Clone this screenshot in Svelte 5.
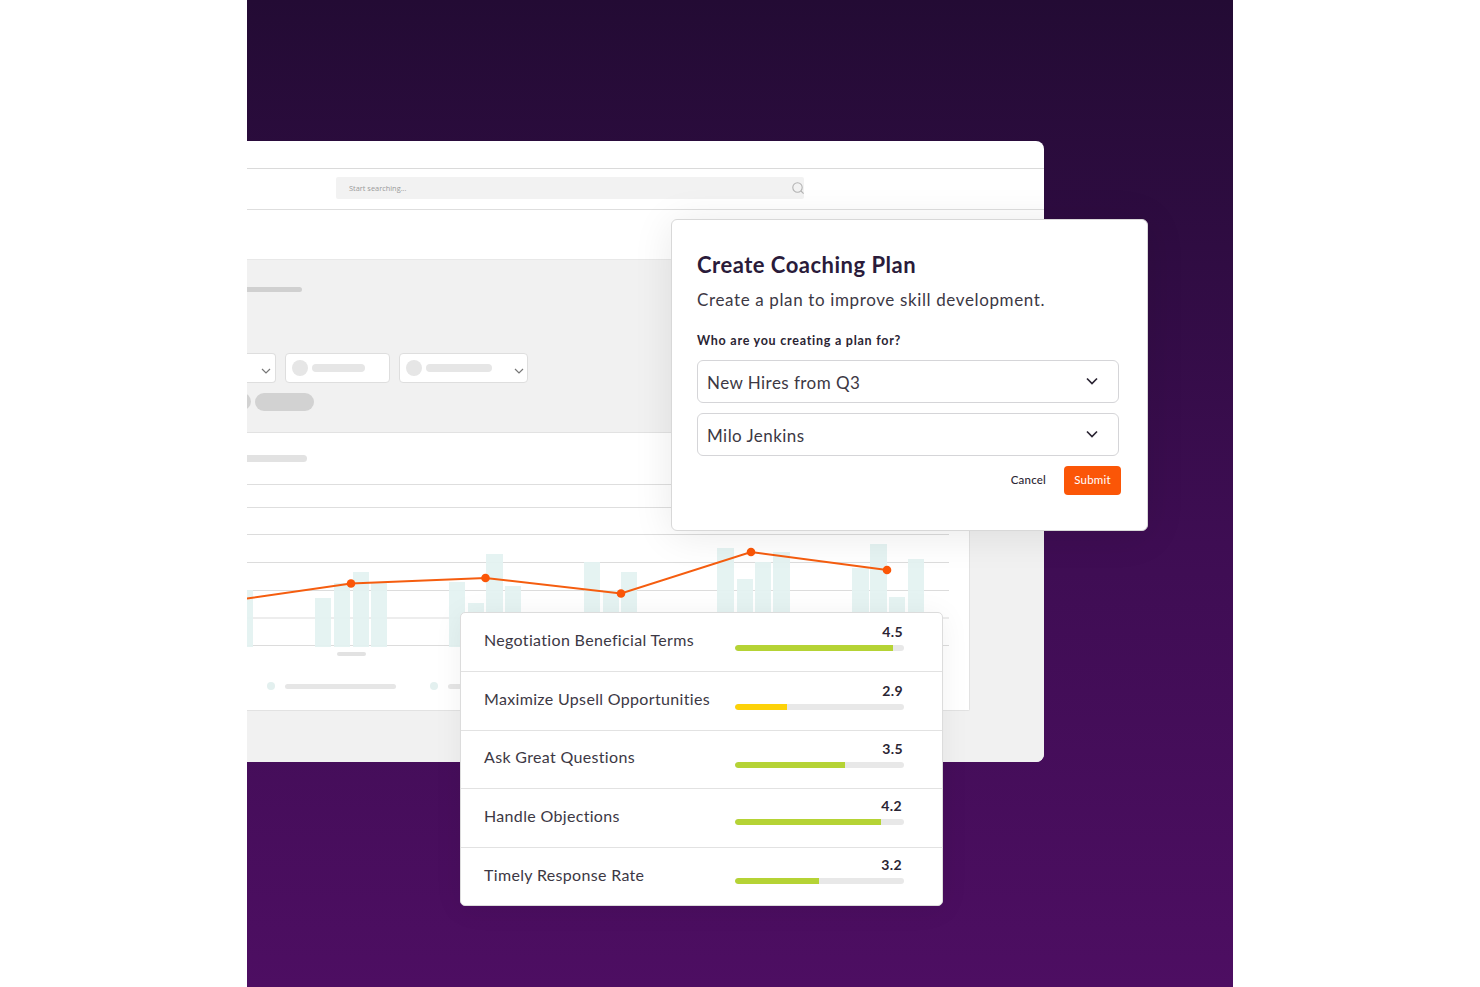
<script>
  const bars = [
    [247,590,6],[315,598,16],[334,583,16],[353,572,16],[371,583,16],
    [449,582,16],[468,603,16],[486,554,17],[505,586,16],
    [584,562,16],[603,590,16],[621,572,16],
    [717,548,17],[737,579,16],[755,562,16],[773,552,17],
    [852,568,17],[870,544,17],[889,597,16],[908,559,16]
  ];
  const pts = [[247,598.5],[351,583.5],[485.5,578],[621,593.5],[751,552],[887,570]];
  const scores = [
    { name: 'Negotiation Beneficial Terms', v: '4.5', w: 158, c: '#b5d335' },
    { name: 'Maximize Upsell Opportunities', v: '2.9', w: 52, c: '#fdd208' },
    { name: 'Ask Great Questions', v: '3.5', w: 110, c: '#b5d335' },
    { name: 'Handle Objections', v: '4.2', w: 146, c: '#b5d335', low: true },
    { name: 'Timely Response Rate', v: '3.2', w: 84, c: '#b5d335', low: true }
  ];
</script>

<main class="page">
  <section class="stage">
    <div class="window">
      <div class="topbar"></div>
      <div class="searchrow">
        <div class="search">
          <span>Start searching...</span>
          <svg width="14" height="14" viewBox="0 0 14 14" fill="none" stroke="#b4b4b4" stroke-width="1.1"><circle cx="6.5" cy="6.5" r="4.7"/><path d="M10 10l2.6 2.6"/></svg>
        </div>
      </div>
      <div class="subbar"></div>
      <div class="workspace">
        <div class="headbar"></div>
        <div class="filters">
          <div class="filter f1"><svg class="chev" width="10" height="6" viewBox="0 0 10 6" fill="none" stroke="#777" stroke-width="1.2"><path d="M1 1l4 4 4-4"/></svg></div>
          <div class="filter f2"><i></i><b></b></div>
          <div class="filter f3"><i></i><b></b><svg class="chev" width="10" height="6" viewBox="0 0 10 6" fill="none" stroke="#777" stroke-width="1.2"><path d="M1 1l4 4 4-4"/></svg></div>
        </div>
        <div class="pills"><span class="dot"></span><span class="pill"></span></div>
        <div class="card">
          <div class="cardhead"><div class="cardbar"></div></div>
          <div class="rule"></div>
          <div class="chart">
            <svg width="723" height="133" viewBox="247 534 723 133">
              {#each [534.5,562.5,590.5,618,645.5] as y}
                <line x1="247" x2="949" y1={y} y2={y} stroke="#dcdcdc" stroke-width="1.2"/>
              {/each}
              {#each bars as [x,t,w]}
                <rect {x} y={t} width={w} height={647-t} fill="#e3f2f1" opacity="0.92"/>
              {/each}
              <polyline points={pts.map(p=>p.join(',')).join(' ')} fill="none" stroke="#f55d0f" stroke-width="2"/>
              {#each pts.slice(1) as [x,y]}
                <circle cx={x} cy={y} r="4.3" fill="#fb5607"/>
              {/each}
              <rect x="337" y="652" width="29" height="4" rx="2" fill="#e2e2e2"/>
            </svg>
          </div>
          <div class="legend">
            <i></i><b></b><i class="second"></i><b class="short"></b>
          </div>
        </div>
      </div>
    </div>

    <div class="modal">
      <h2>Create Coaching Plan</h2>
      <p>Create a plan to improve skill development.</p>
      <label for="who">Who are you creating a plan for?</label>
      <div class="select" id="who">
        <span>New Hires from Q3</span>
        <svg width="14" height="9" viewBox="0 0 14 9" fill="none" stroke="#2b2533" stroke-width="1.7"><path d="M2 1.5l5 5 5-5"/></svg>
      </div>
      <div class="select">
        <span>Milo Jenkins</span>
        <svg width="14" height="9" viewBox="0 0 14 9" fill="none" stroke="#2b2533" stroke-width="1.7"><path d="M2 1.5l5 5 5-5"/></svg>
      </div>
      <div class="actions">
        <span class="cancel">Cancel</span>
        <span class="submit">Submit</span>
      </div>
    </div>

    <div class="scores">
      {#each scores as s}
        <div class="row">
          <span class="name">{s.name}</span>
          <div class="meter" class:low={s.low}>
            <span class="val">{s.v}</span>
            <div class="track"><div class="fill" style="width:{s.w}px;background:{s.c}"></div></div>
          </div>
        </div>
      {/each}
    </div>
  </section>
</main>

<style>
  :global(body) { margin: 0; background: #fff; }
  * { box-sizing: border-box; }
  .page { width: 1480px; height: 987px; padding-left: 247px; overflow: hidden; font-family: "Lato", "Open Sans", sans-serif; }
  .stage { position: relative; width: 986px; height: 987px; padding-top: 141px; background: linear-gradient(180deg, #230b34 0%, #2f0c42 25%, #3e0d53 55%, #4d0e62 100%); }

  .window { width: 797px; height: 621px; background: #fff; border-radius: 0 8px 8px 0; overflow: hidden; display: flex; flex-direction: column; }
  .topbar { height: 28px; border-bottom: 1px solid #dadada; flex: none; }
  .searchrow { height: 41px; border-bottom: 1px solid #dedede; padding: 8px 0 0 89px; flex: none; }
  .search { width: 468px; height: 22px; background: #f2f2f2; display: flex; align-items: center; justify-content: space-between; padding: 0 0 0 13px; border-radius: 2px; }
  .search span { font-family: "Open Sans", sans-serif; font-size: 7.4px; color: #9b9b9b; }
  .search svg { margin-right: -1px; }
  .subbar { height: 50px; flex: none; border-bottom: 1px solid #e8e8e8; }
  .workspace { flex: 1; background: #f1f1f1; position: relative; padding-top: 27px; }
  .headbar { width: 55px; height: 5px; background: #d0d0d0; border-radius: 0 3px 3px 0; filter: blur(.4px); }
  .filters { display: flex; gap: 9px; margin-top: 61px; margin-left: -9px; }
  .filter { height: 30px; background: #fff; border: 1px solid #dedede; border-radius: 4px; display: flex; align-items: center; position: relative; padding-left: 6px; }
  .filter i { width: 16px; height: 16px; border-radius: 50%; background: #e6e6e6; }
  .filter b { height: 8px; background: #e6e6e6; border-radius: 4px; margin-left: 4px; }
  .f1 { width: 38px; border-radius: 0 4px 4px 0; border-left: 0; }
  .f2 { width: 105px; } .f2 b { width: 53px; }
  .f3 { width: 129px; } .f3 b { width: 66px; }
  .chev { position: absolute; right: 3px; top: 14px; }
  .f1 .chev { right: 4px; }
  .pills { display: flex; gap: 4px; margin-top: 10px; margin-left: -13px; }
  .pills .dot { width: 17px; height: 17px; border-radius: 50%; background: #d2d2d2; }
  .pill { width: 59px; height: 18px; border-radius: 9px; background: #d2d2d2; }

  .card { width: 723px; height: 279px; margin-top: 21px; background: #fff; border: 1px solid #e2e2e2; border-left: 0; border-radius: 0 2px 2px 0; position: relative; }
  .cardhead { height: 52px; padding-top: 22px; border-bottom: 1px solid #dedede; }
  .cardbar { width: 60px; height: 7px; background: #e2e2e2; border-radius: 0 4px 4px 0; filter: blur(.6px); }
  .rule { height: 1px; background: #dedede; width: 703px; margin-top: 22px; }
  .chart { height: 133px; margin-top: 26px; }
  .chart svg { display: block; overflow: visible; }
  .legend { display: flex; align-items: center; padding-left: 20px; margin-top: 15px; }
  .legend i { width: 8px; height: 8px; border-radius: 50%; background: #e3f0ef; }
  .legend b { width: 111px; height: 5px; background: #e6e6e6; border-radius: 3px; margin-left: 10px; }
  .legend .second { margin-left: 34px; }
  .legend b.short { width: 20px; }

  .modal { position: absolute; left: 424px; top: 219px; width: 477px; height: 312px; background: #fff; border: 1px solid #d8d8d8; border-radius: 6px; padding: 31px 25px 0; box-shadow: 0 4px 40px rgba(0,0,0,.09); color: #2b2238; }
  h2 { margin: 0; font-size: 22px; line-height: 28px; font-weight: 700; letter-spacing: .5px; color: #2a1b3a; }
  p { margin: 9px 0 0; font-size: 17px; line-height: 24px; letter-spacing: .63px; color: #3c3844; }
  label { display: block; margin-top: 21px; font-size: 12.5px; line-height: 16px; font-weight: 700; letter-spacing: .75px; color: #2a2433; }
  .select { width: 422px; height: 43px; padding: 0 19px 0 9px; border: 1.5px solid #d5d5d8; border-radius: 6px; display: flex; align-items: center; justify-content: space-between; font-size: 17px; letter-spacing: .45px; color: #3c3844; }
  .select span { padding-top: 1px; }
  label + .select { margin-top: 11px; }
  .select + .select { margin-top: 10px; }
  .actions { display: flex; justify-content: flex-end; align-items: center; gap: 18px; margin-top: 10px; margin-right: 1px; }
  .cancel { font-size: 11.5px; letter-spacing: .2px; font-weight: 500; color: #2b2533; padding-bottom: 2px; }
  .submit { width: 57px; height: 29px; padding-bottom: 2px; background: #fb5607; border-radius: 4px; color: #fff; font-size: 11.5px; letter-spacing: .2px; display: flex; align-items: center; justify-content: center; }

  .scores { position: absolute; left: 213px; top: 612px; width: 483px; height: 294px; background: #fff; border: 1px solid #dcdcdc; border-radius: 5px; display: flex; flex-direction: column; box-shadow: 0 3px 30px rgba(0,0,0,.06); }
  .row { flex: none; height: 58.75px; display: flex; align-items: center; justify-content: space-between; padding: 0 38px 0 23px; border-bottom: 1.5px solid #e2e2e2; position: relative; }
  .row:last-child { border-bottom: 0; flex: 1; height: auto; }
  .name { font-size: 16px; letter-spacing: .33px; color: #3c3844; margin-bottom: 5px; }
  .meter { width: 169px; height: 27px; display: flex; flex-direction: column; align-items: flex-end; justify-content: space-between; margin-bottom: 9px; }
  .meter.low { margin-bottom: 13px; }
  .val { font-size: 14px; line-height: 16px; font-weight: 700; letter-spacing: .4px; color: #2a2433; margin-right: 1px; }
  .meter.low .val { margin-right: 2px; }
  .track { width: 169px; height: 6px; border-radius: 3px; background: #e8e8e8; overflow: hidden; flex: none; }
  .fill { height: 100%; border-radius: 3px 0 0 3px; }
</style>
